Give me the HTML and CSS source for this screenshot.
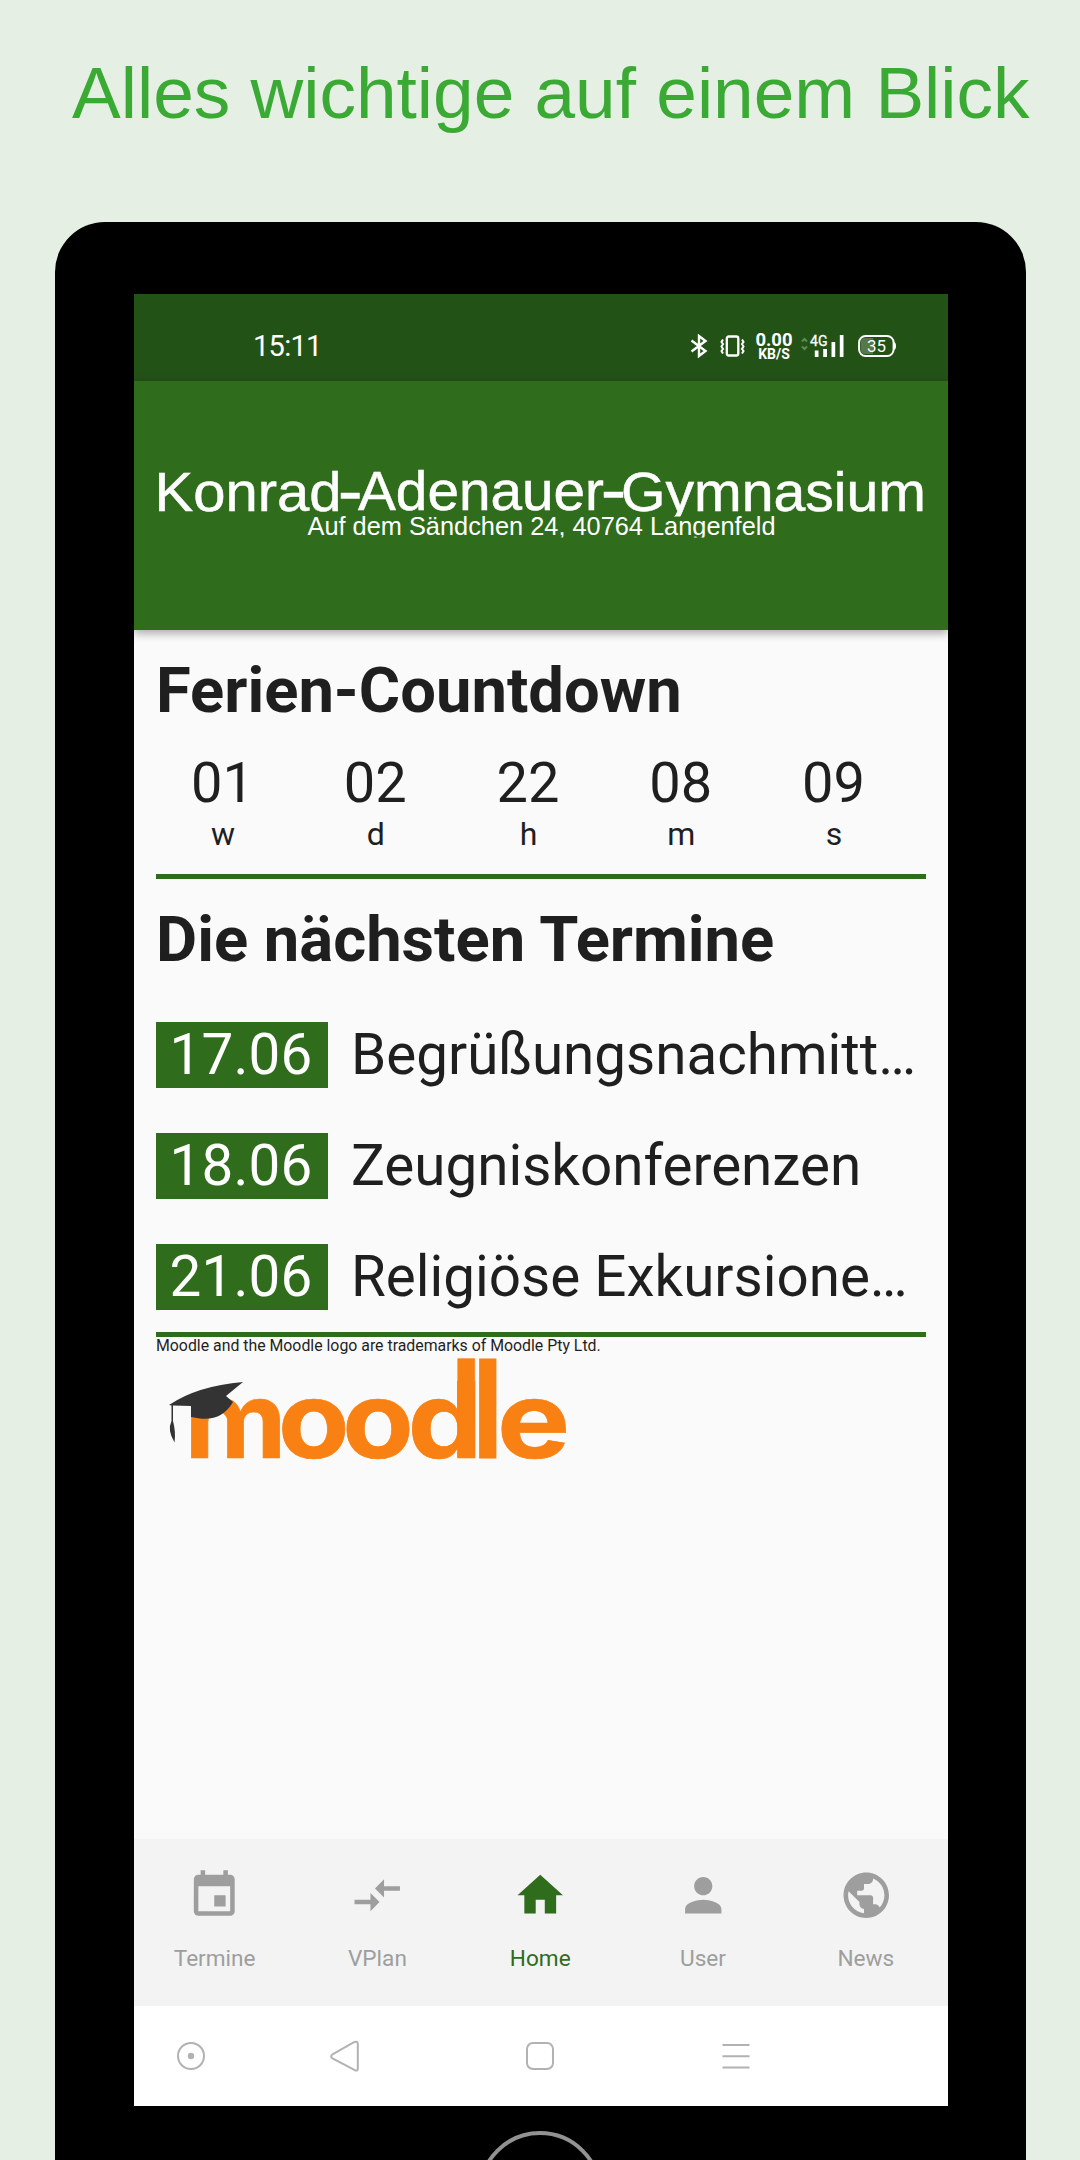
FILE: index.html
```html
<!DOCTYPE html>
<html lang="de">
<head>
<meta charset="utf-8">
<title>Konrad-Adenauer-Gymnasium</title>
<link rel="stylesheet" href="styles.css">
</head>
<body>
<h1 class="headline">Alles wichtige auf einem Blick</h1>
<div class="phone">
  <div class="screen">
    <div class="statusbar">
      <span class="clock">15:11</span>
      <div class="status-icons">
        <svg class="bt" width="18" height="24" viewBox="0 0 18 24" fill="none" stroke="#fff" stroke-width="2.400"><path d="M1.500 6.500 15.500 17 9 22V2L15.500 7 1.500 17.500"/></svg>
        <svg class="vib" width="25" height="24" viewBox="0 0 25 24" fill="none" stroke="#fff" stroke-width="2.300"><rect x="6.800" y="2.500" width="11.500" height="19" rx="2"/><path stroke-width="2" d="M3 5.500 1.500 8 3 10 1.500 12.500 3 15 1.500 17 3 19.500M22 5.500 23.500 8 22 10 23.500 12.500 22 15 23.500 17 22 19.500"/></svg>
        <div class="speed"><b>0.00</b><small>KB/S</small></div>
        <svg class="signal" width="44" height="26" viewBox="0 0 44 26"><path d="M2 8.500 4.500 6l2.500 2.500M2 13.500l2.500 2.500 2.500-2.500" fill="none" stroke="#5f8a50" stroke-width="2"/><text x="10" y="12.800" class="net" textLength="17.500" lengthAdjust="spacingAndGlyphs">4G</text><path fill="#fff" d="M14.800 17.500h3.700V24h-3.700zM23.200 16H27v8h-3.800zM31.500 9h3.700v15h-3.700zM39.800 2h3.700v22h-3.700z"/></svg>
        <svg class="battery" width="38" height="24" viewBox="0 0 38 24"><path d="M3 7Q3 4 7 4h8v16H7Q3 20 3 17z" fill="#56784a"/><rect x="1.100" y="2" width="34.500" height="20" rx="6.500" fill="none" stroke="#fff" stroke-width="2"/><path d="M36 8q2 .5 2 4t-2 4z" fill="#fff"/><text x="9" y="18" class="level" textLength="19" lengthAdjust="spacingAndGlyphs">35</text></svg>
      </div>
    </div>
    <header class="appbar">
      <svg class="school" width="770" height="74" viewBox="156 466 770 74">
        <defs><clipPath id="upper"><path d="M150 460h780v56.500H150z"/></clipPath><clipPath id="lower"><path d="M150 516h780v21.500H150z"/></clipPath></defs>
        <g class="school-name" clip-path="url(#upper)">
          <text x="154.500" y="510.700" textLength="187" lengthAdjust="spacingAndGlyphs">Konrad</text>
          <text x="358" y="509.700" textLength="246" lengthAdjust="spacingAndGlyphs">Adenauer</text>
          <text x="621" y="510.700" textLength="305" lengthAdjust="spacingAndGlyphs">Gymnasium</text>
          <path d="M341 493h18.500v5.500H341zM604 492h19v5.500h-19z"/>
        </g>
        <text class="school-address" clip-path="url(#lower)" x="307.500" y="534.600" textLength="468" lengthAdjust="spacingAndGlyphs">Auf dem Sändchen 24, 40764 Langenfeld</text>
      </svg>
    </header>
    <main class="content">
      <h2 class="section-title">Ferien-Countdown</h2>
      <div class="countdown">
        <div class="unit"><span>01</span><small>w</small></div>
        <div class="unit"><span>02</span><small>d</small></div>
        <div class="unit"><span>22</span><small>h</small></div>
        <div class="unit"><span>08</span><small>m</small></div>
        <div class="unit"><span>09</span><small>s</small></div>
      </div>
      <hr class="rule">
      <h2 class="section-title dates-title">Die nächsten Termine</h2>
      <ul class="events">
        <li><time>17.06</time><span>Begrüßungsnachmitt…</span></li>
        <li><time>18.06</time><span>Zeugniskonferenzen</span></li>
        <li><time>21.06</time><span>Religiöse Exkursione…</span></li>
      </ul>
      <hr class="rule">
      <p class="trademark">Moodle and the Moodle logo are trademarks of Moodle Pty Ltd.</p>
      <svg class="moodle" width="414" height="106" viewBox="156 1356 414 106">
        <g class="moodle-word">
          <text x="184.500" y="1457.700" textLength="102" lengthAdjust="spacingAndGlyphs">m</text>
          <text x="278" y="1457.700" textLength="71.500" lengthAdjust="spacingAndGlyphs">o</text>
          <text x="342.300" y="1457.700" textLength="71.500" lengthAdjust="spacingAndGlyphs">o</text>
          <text x="407.800" y="1457.700" textLength="74.500" lengthAdjust="spacingAndGlyphs">d</text>
          <text transform="translate(472.500 1457.700) scale(1.060 1.280)">l</text>
          <text x="497" y="1457.700" textLength="73" lengthAdjust="spacingAndGlyphs">e</text>
          <path d="M457.800 1358.700H474.700V1457.500h-16.900z"/>
        </g>
        <path fill="#333" d="M169 1405Q197 1386 243 1382L226 1396 233 1402Q222 1421 200 1418.500L191 1417V1406L173 1405.500V1421Q176 1432 174.500 1442.500 167 1430 171.500 1421V1405.500z"/>
      </svg>
    </main>
    <nav class="tabs">
      <a class="tab"><svg viewBox="0 0 24 24"><path d="M17 12h-5v5h5v-5zM16 1v2H8V1H6v2H5c-1.110 0-1.990.9-1.990 2L3 19c0 1.100.89 2 2 2h14c1.100 0 2-.9 2-2V5c0-1.100-.9-2-2-2h-1V1h-2zm3 18H5V8h14v11z"/></svg>Termine</a>
      <a class="tab"><svg viewBox="0 0 24 24"><path d="M9.010 14H2v2h7.010v3L13 15l-3.990-4v3zm5.980-1v-3H22V8h-7.010V5L11 9l3.990 4z"/></svg>VPlan</a>
      <a class="tab active"><svg viewBox="0 0 24 24"><path d="M10 20v-6h4v6h5v-8h3L12 3 2 12h3v8z"/></svg>Home</a>
      <a class="tab"><svg viewBox="0 0 24 24"><path d="M12 12c2.210 0 4-1.790 4-4s-1.790-4-4-4-4 1.790-4 4 1.790 4 4 4zm0 2c-2.670 0-8 1.340-8 4v2h16v-2c0-2.660-5.330-4-8-4z"/></svg>User</a>
      <a class="tab"><svg viewBox="0 0 24 24"><path d="M12 2C6.480 2 2 6.480 2 12s4.480 10 10 10 10-4.480 10-10S17.520 2 12 2zm-1 17.930c-3.950-.49-7-3.850-7-7.930 0-.62.08-1.210.21-1.790L9 15v1c0 1.100.9 2 2 2v1.930zm6.900-2.540c-.26-.81-1-1.390-1.900-1.390h-1v-3c0-.55-.45-1-1-1H8v-2h2c.55 0 1-.45 1-1V7h2c1.100 0 2-.9 2-2v-.41c2.930 1.190 5 4.060 5 7.410 0 2.080-.8 3.970-2.100 5.390z"/></svg>News</a>
    </nav>
    <div class="sysnav">
      <svg width="30" height="32" viewBox="0 0 30 32"><circle cx="15" cy="16" r="13"/><circle class="dot" cx="15" cy="16" r="3.200"/></svg>
      <svg width="30" height="32" viewBox="0 0 30 32"><path d="M25.500 2Q28.800.8 28.800 4V28.500Q28.800 31.300 25.800 30.200L3.500 18.400Q.8 16.400 3.500 14.300z"/></svg>
      <svg width="30" height="32" viewBox="0 0 30 32"><rect x="2" y="3" width="26" height="26" rx="6"/></svg>
      <svg width="30" height="32" viewBox="0 0 30 32"><path d="M1.500 5h27M1.500 16.200h27M1.500 27.600h27"/></svg>
    </div>
  </div>
  <div class="home-button"></div>
</div>
</body>
</html>
```
FILE: styles.css
```css
* { box-sizing: border-box; }
body {
  margin: 0;
  width: 1080px;
  height: 2160px;
  overflow: hidden;
  background: #e5efe3;
  font-family: Roboto, "Liberation Sans", sans-serif;
  color: #1f1f1f;
}
.headline {
  margin: 0;
  height: 222px;
  padding: 51px 0 0 72px;
  font: 400 73px/84px "Liberation Sans", Arial, sans-serif;
  color: #3aaa35;
  white-space: nowrap;
}
.phone {
  width: 971px;
  height: 1938px;
  margin-left: 55px;
  padding: 72px 78px 0 79px;
  border-radius: 50px 50px 0 0;
  overflow: hidden;
  background: #000;
}
.screen {
  display: flex;
  flex-direction: column;
  height: 1812px;
  background: #fafafa;
}
.statusbar {
  display: flex;
  justify-content: space-between;
  height: 87px;
  padding: 17px 52px 0 119px;
  background: #235217;
  color: #fff;
}
.clock { font-size: 29px; line-height: 70px; letter-spacing: -0.700px; }
.status-icons { display: flex; align-items: center; height: 70px; }
.vib { margin-left: 12px; }
.speed {
  display: flex;
  flex-direction: column;
  align-items: center;
  width: 38px;
  margin-left: 10px;
}
.speed b { font-size: 18.500px; line-height: 16px; }
.speed small { font-size: 14px; font-weight: 700; line-height: 13px; }
.signal { margin-left: 7px; }
.net { font-size: 15px; fill: #fff; stroke: #fff; stroke-width: 0.300px; }
.battery { margin-left: 14px; }
.level { font-size: 17px; fill: #fff; }
.appbar {
  position: relative;
  height: 249px;
  padding: 85px 22px 0;
  background: #2f6c1c;
  box-shadow: 0 3px 9px rgba(0, 0, 0, 0.35);
}
.school { display: block; }
.school-name { font: 55.500px "Liberation Sans", Arial, sans-serif; fill: #fff; stroke: #fff; stroke-width: 0.500px; }
.school-address { font: 25px "Liberation Sans", Arial, sans-serif; fill: #fff; }
.content { flex: 1; padding: 22px 22px 0; }
.section-title {
  margin: 0;
  font-size: 63.300px;
  line-height: 76px;
  font-weight: 700;
  white-space: nowrap;
}
.countdown { display: flex; width: 764px; margin-left: -10px; padding-top: 22px; }
.unit { display: flex; flex: 1; flex-direction: column; align-items: center; }
.unit span { font-size: 56px; line-height: 66px; }
.unit small { font-size: 32px; line-height: 36px; padding-left: 1px; }
.rule { height: 5px; margin: 0; border: 0; background: #2f6c1c; }
.countdown + .rule { margin-top: 22px; }
.dates-title { margin-top: 22px; }
.events { margin: 0; padding: 45px 0 22px; list-style: none; display: grid; gap: 45px; }
.events li {
  display: flex;
  gap: 23px;
  height: 66px;
  font-size: 56.550px;
  line-height: 66px;
  white-space: nowrap;
}
.events time { width: 172px; background: #2f6c1c; color: #fff; text-align: center; letter-spacing: 0.200px; padding-right: 2px; }
.trademark { margin: 0; font-size: 15.850px; line-height: 18px; }
.moodle { display: block; margin-top: 1px; }
.moodle-word { font: 700 106px Inter, sans-serif; fill: #f98012; stroke: #f98012; stroke-width: 0.700px; }
.tabs { display: flex; height: 167px; background: #f3f3f3; }
.tab {
  display: flex;
  flex: 1;
  flex-direction: column;
  align-items: center;
  gap: 23px;
  padding: 29px 1.500px 0 0;
  font-size: 22.600px;
  line-height: 26px;
  color: #9e9e9e;
}
.tab svg { width: 54.500px; height: 54.500px; fill: currentColor; }
.active { color: #2f6c1c; }
.sysnav { display: flex; height: 100px; padding: 34px 0 0 42px; background: #fff; }
.sysnav svg { fill: none; stroke: #b2b2b2; stroke-width: 2; }
.sysnav svg + svg { margin-left: 123px; }
.sysnav svg:nth-child(n+3) { margin-left: 166px; }
.sysnav .dot { fill: #b2b2b2; stroke: none; }
.home-button { width: 124px; height: 124px; margin: 25px 0 0 344px; border: 4px solid #929292; border-radius: 50%; }
```
